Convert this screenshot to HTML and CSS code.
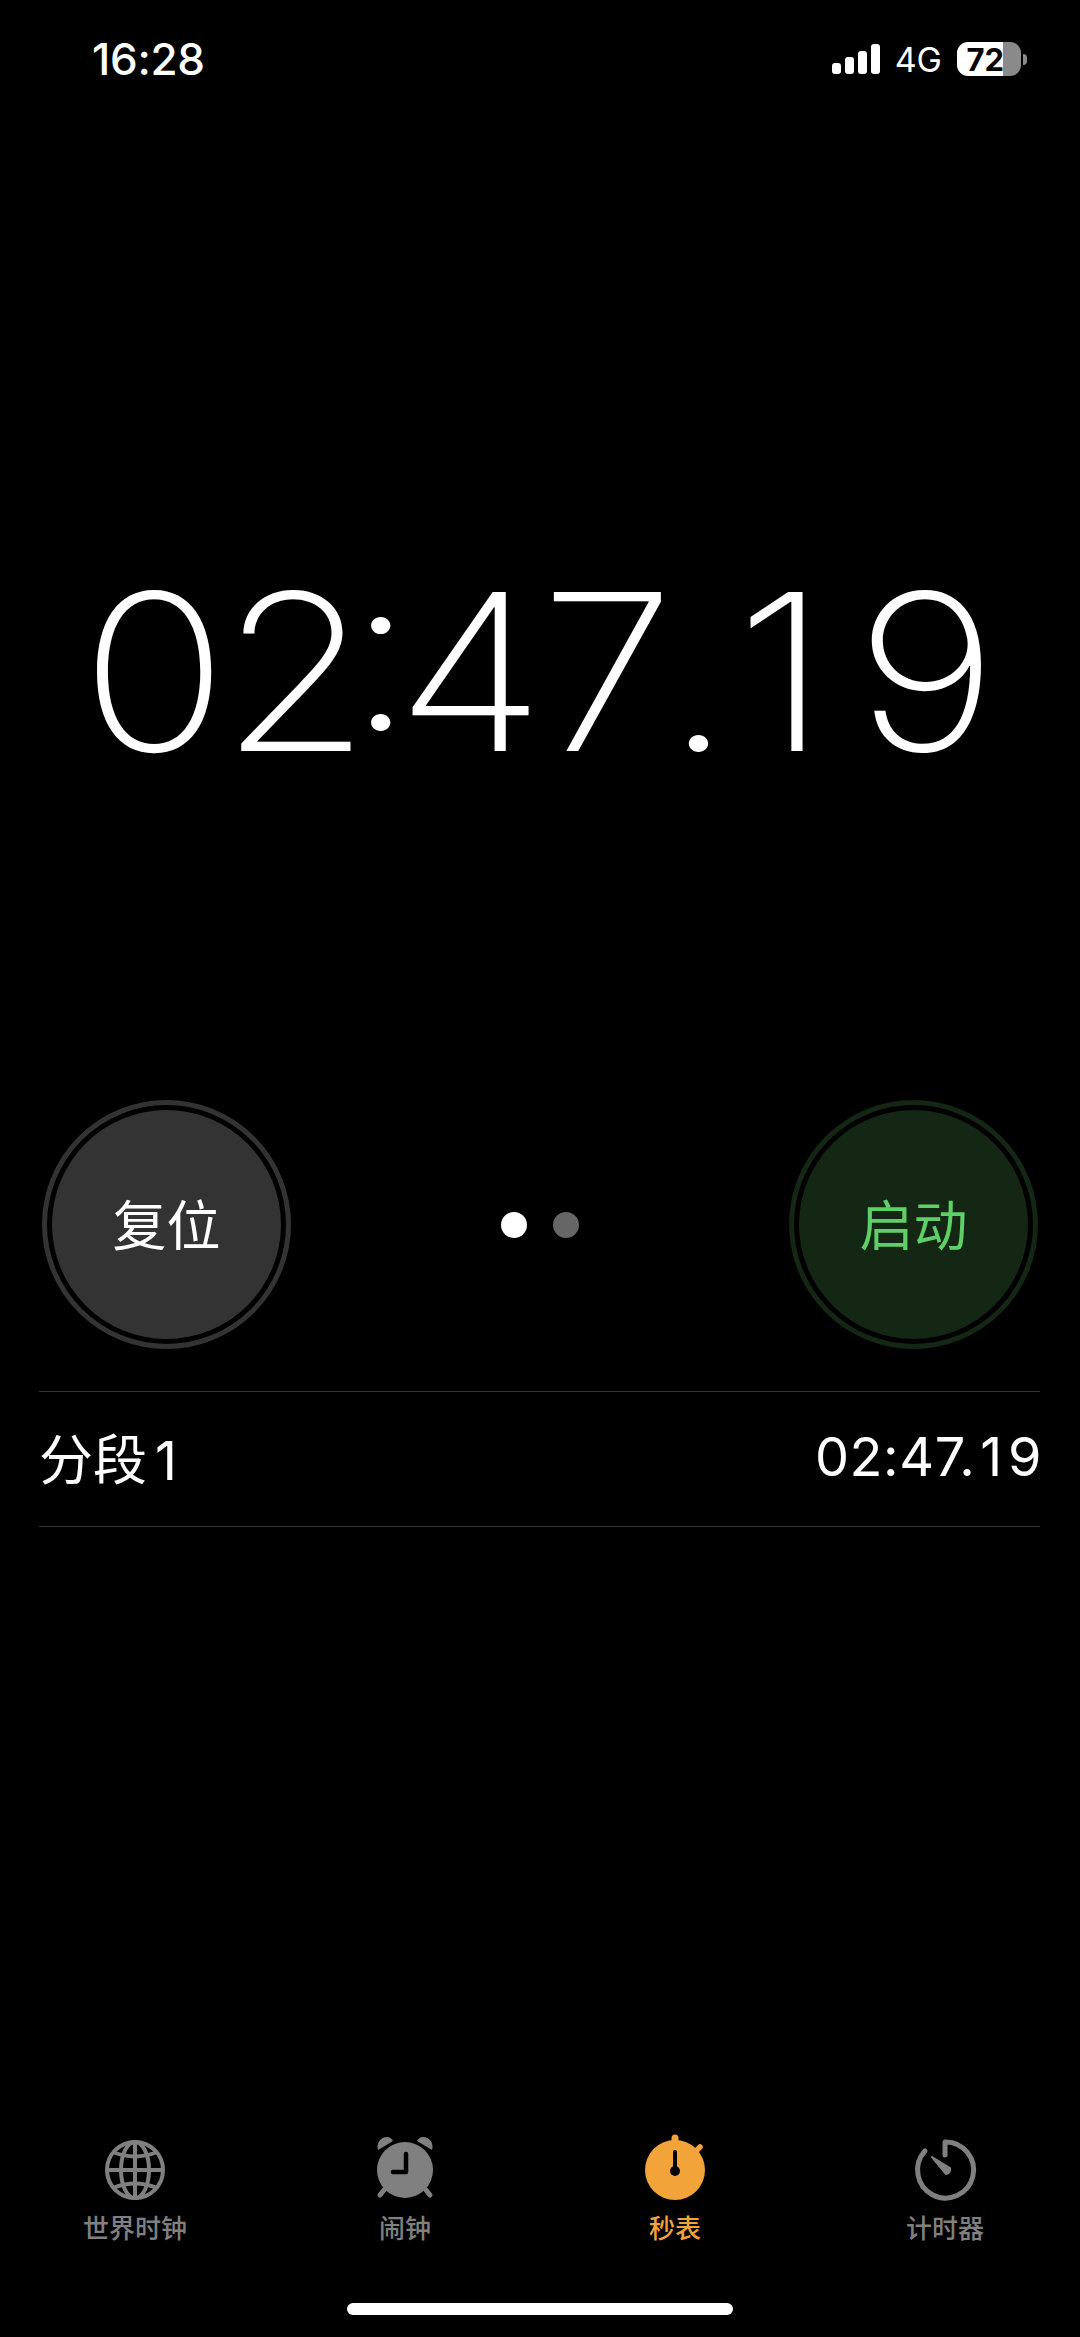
FILE: index.html
```html
<!DOCTYPE html>
<html lang="zh-CN">
<head>
<meta charset="utf-8">
<title>秒表</title>
<link rel="stylesheet" href="styles.css">
</head>
<body>
<div class="screen">
  <header class="status">
    <span class="clock">16:28</span>
    <div class="indicators">
      <svg class="signal" viewBox="0 0 48 30" width="48" height="30" aria-hidden="true">
        <rect x="0" y="19" width="9" height="11" rx="3"/>
        <rect x="13" y="13" width="9" height="17" rx="3"/>
        <rect x="26" y="7" width="9" height="23" rx="3"/>
        <rect x="39" y="0" width="9" height="30" rx="3"/>
      </svg>
      <span class="net">4G</span>
      <div class="battery">
        <div class="battery-body"><span class="battery-level">72</span></div>
        <div class="battery-cap"></div>
      </div>
    </div>
  </header>

  <main class="display">
    <p class="readout"><span class="d d0">0</span><span class="d d2">2</span><span class="d co">:</span><span class="d d4">4</span><span class="d d7">7</span><span class="d pt">.</span><span class="d d1">1</span><span class="d">9</span></p>
  </main>

  <section class="controls">
    <button class="round reset"><span class="round-face">复位</span></button>
    <div class="dots"><i class="dot on"></i><i class="dot"></i></div>
    <button class="round start"><span class="round-face">启动</span></button>
  </section>

  <section class="laps">
    <div class="lap"><span class="lap-name">分段<span class="one one-name">1</span></span><span class="lap-time">02:47.<span class="one">1</span>9</span></div>
  </section>

  <nav class="tabs">
    <div class="tab">
      <svg class="icon" viewBox="0 0 80 80" aria-hidden="true">
        <g fill="none" stroke="#808080" stroke-width="4">
          <circle cx="40" cy="40" r="28"/>
          <ellipse cx="40" cy="40" rx="14" ry="28"/>
          <path d="M40 12V68M12 40H68"/>
          <path d="M18 22Q40 31 62 22M18 58Q40 49 62 58"/>
        </g>
      </svg>
      <span class="tab-label">世界时钟</span>
    </div>
    <div class="tab">
      <svg class="icon" viewBox="0 0 80 80" aria-hidden="true">
        <g fill="#808080">
          <circle cx="40" cy="40" r="28"/>
          <path d="M13 20C11 14 15 7 22 7C25 7 27 9 28 11Z"/>
          <path d="M67 20C69 14 65 7 58 7C55 7 53 9 52 11Z"/>
        </g>
        <path d="M19 60L15 65M61 60L65 65" stroke="#808080" stroke-width="5" stroke-linecap="round"/>
        <path d="M41 24V42H28" fill="none" stroke="#000" stroke-width="4.5" stroke-linecap="round" stroke-linejoin="round"/>
      </svg>
      <span class="tab-label">闹钟</span>
    </div>
    <div class="tab active">
      <svg class="icon" viewBox="0 0 80 80" aria-hidden="true">
        <circle cx="40" cy="40" r="30" fill="#f2a33a"/>
        <path d="M40 8V14" stroke="#f2a33a" stroke-width="7" stroke-linecap="round"/>
        <path d="M58 24L65 17" stroke="#f2a33a" stroke-width="5.5" stroke-linecap="round"/>
        <path d="M40 22V40" stroke="#000" stroke-width="4" stroke-linecap="round"/>
        <circle cx="40" cy="41" r="5" fill="#000"/>
      </svg>
      <span class="tab-label">秒表</span>
    </div>
    <div class="tab">
      <svg class="icon" viewBox="0 0 80 80" aria-hidden="true">
        <path d="M20 21A28 28 0 1 0 40 12V25" fill="none" stroke="#808080" stroke-width="5" stroke-linecap="round" stroke-linejoin="round"/>
        <path d="M27 27L45 38A4.5 4.5 0 0 1 41 44Z" fill="#808080" stroke="#808080" stroke-width="2" stroke-linejoin="round"/>
      </svg>
      <span class="tab-label">计时器</span>
    </div>
  </nav>

  <div class="home"></div>
</div>
</body>
</html>
```

FILE: styles.css
```css
* { box-sizing: border-box; margin: 0; padding: 0; }

html, body { background: #000; }

body {
  width: 1080px;
  height: 2337px;
  overflow: hidden;
  color: #fff;
  font-family: Inter, "Noto Sans CJK SC", sans-serif;
}

.screen {
  display: flex;
  flex-direction: column;
  height: 2337px;
}

.status {
  display: flex;
  justify-content: space-between;
  align-items: center;
  height: 118px;
  padding: 0 53px 0 92px;
}

.clock { font-size: 44px; font-weight: 550; letter-spacing: -0.3px; }

.indicators { display: flex; align-items: center; }

.signal { display: block; fill: #fff; margin-top: -1px; }

.net { font-size: 34px; font-weight: 400; margin-left: 15px; }

.battery { display: flex; align-items: center; margin-left: 15px; }

.battery-body {
  display: flex;
  align-items: center;
  justify-content: flex-end;
  width: 64px;
  height: 34px;
  padding-right: 17px;
  border-radius: 11px;
  background: linear-gradient(to right, #fff 72%, #8a8a8a 72%);
}

.battery-level { color: #000; font-size: 31px; font-weight: 700; line-height: 1; }

.battery-cap {
  width: 4px;
  height: 11px;
  margin-left: 2px;
  border-radius: 0 4px 4px 0;
  background: #8a8a8a;
}

.display {
  display: flex;
  justify-content: center;
  align-items: center;
  height: 982px;
  padding-top: 126px;
}

.readout {
  font-size: 218px;
  font-weight: 170;
  line-height: 1;
  white-space: nowrap;
  transform: scaleX(1.12);
}

.d { font-variant-numeric: tabular-nums; }
.d0 { letter-spacing: -14.3px; }
.d2 { letter-spacing: -23.9px; }
.co { letter-spacing: -19.4px; font-feature-settings: "case" 1; }
.d4 { letter-spacing: -18.7px; }
.d7 { letter-spacing: -18.5px; }
.pt { letter-spacing: 3.7px; }
.d1 { letter-spacing: 17.3px; font-variant-numeric: normal; }

.controls {
  display: flex;
  justify-content: space-between;
  align-items: center;
  padding: 0 42px;
}

.round {
  display: block;
  width: 249px;
  height: 249px;
  padding: 5px;
  border-radius: 50%;
  border: 5px solid;
  background: transparent;
  font: inherit;
}

.round-face {
  display: flex;
  justify-content: center;
  align-items: center;
  width: 100%;
  height: 100%;
  padding-bottom: 5px;
  border-radius: 50%;
  font-size: 54px;
  font-weight: 400;
}

.reset { border-color: #333; }
.reset .round-face { background: #333; color: #fff; }
.start { border-color: #142614; }
.start .round-face { background: #142614; color: #5fd068; }

.dots { display: flex; gap: 26px; }

.dot {
  display: block;
  width: 26px;
  height: 26px;
  border-radius: 50%;
  background: #666;
}

.dot.on { background: #fff; }

.laps {
  margin: 42px 40px 0 39px;
  border-top: 1px solid #333;
  border-bottom: 1px solid #333;
}

.lap {
  display: flex;
  justify-content: space-between;
  align-items: center;
  height: 134px;
  padding-bottom: 6px;
}

.lap-name { font-size: 54px; font-weight: 400; }

.lap-time { font-size: 54px; font-weight: 400; letter-spacing: 0.6px; margin-right: -2px; }

.one { padding: 0 5px; }
.one-name { padding-left: 8px; }

.tabs {
  display: grid;
  grid-template-columns: repeat(4, 1fr);
  margin-top: auto;
}

.tab {
  display: flex;
  flex-direction: column;
  align-items: center;
  color: #808080;
}

.tab.active { color: #f2a33a; }

.icon { display: block; width: 80px; height: 80px; }

.tab-label { font-size: 26px; font-weight: 500; line-height: 36px; margin-top: 1px; }

.home {
  width: 386px;
  height: 12px;
  margin: 56px auto 22px;
  border-radius: 6px;
  background: #fff;
}
```
